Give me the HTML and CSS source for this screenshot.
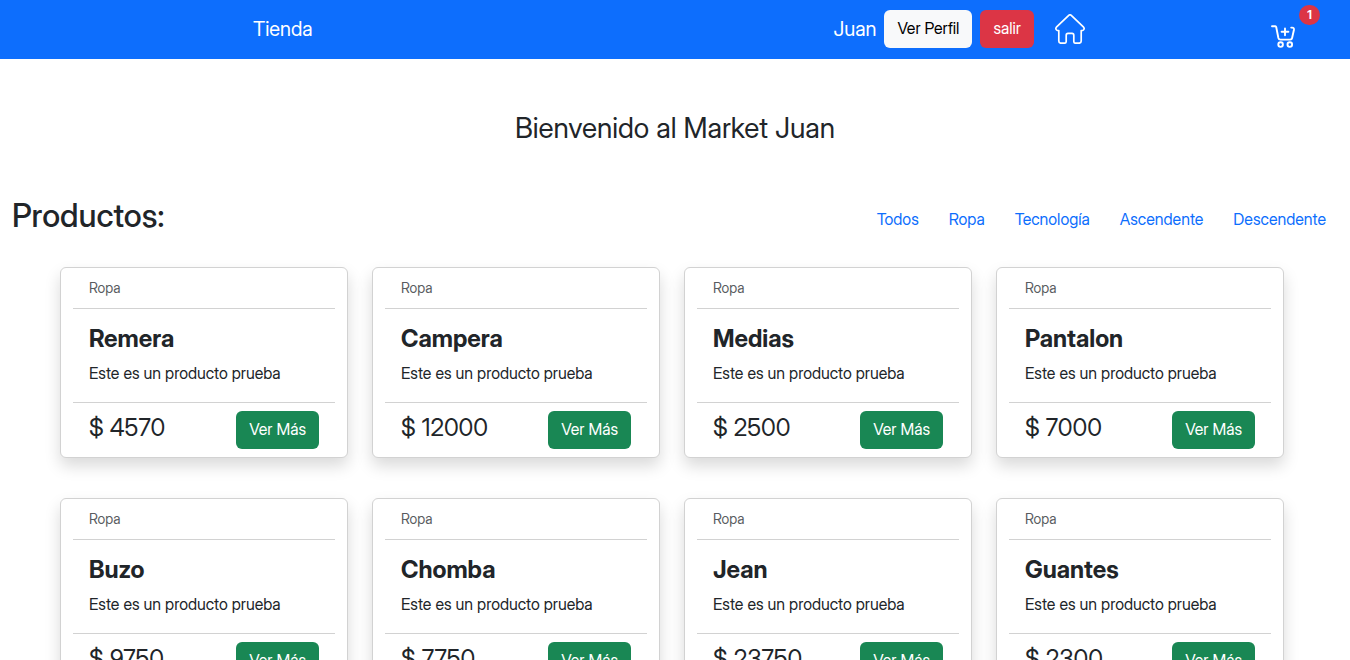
FILE: index.html
```html
<!DOCTYPE html>
<html lang="es">
<head>
<meta charset="utf-8">
<meta name="viewport" content="width=device-width, initial-scale=1">
<title>Tienda</title>
<link rel="stylesheet" href="styles.css">
</head>
<body>
<header class="navbar">
  <a class="brand" href="#">Tienda</a>
  <nav class="user-nav" aria-label="Usuario">
    <span class="user-name">Juan</span>
    <button class="btn btn-light" type="button">Ver Perfil</button>
    <button class="btn btn-danger" type="button">salir</button>
    <a class="home-link" href="#" aria-label="Inicio">
      <svg class="home-icon" viewBox="0 0 30 30" fill="none" stroke="currentColor" stroke-width="1.7" stroke-linejoin="round" stroke-linecap="round" aria-hidden="true">
        <path d="M14 1.2Q15 .4 16 1.2L28.6 13.2Q29.6 14.4 28.8 15.6Q28 16.8 26.2 16.6V27Q26.2 29.2 24 29.2H20.6Q18.8 29.2 18.8 27.4V21.4Q18.8 19.4 17 19.4H13Q11.2 19.4 11.2 21.4V27.4Q11.2 29.2 9.4 29.2H6Q3.8 29.2 3.8 27V16.6Q2 16.8 1.2 15.6Q.4 14.4 1.4 13.2Z"/>
      </svg>
    </a>
  </nav>
  <a class="cart-link" href="#" aria-label="Carrito">
    <svg class="cart-icon" viewBox="0 0 24 24" fill="none" stroke="currentColor" stroke-width="1.9" stroke-linejoin="round" stroke-linecap="round" aria-hidden="true">
      <path d="M1 2.2H4.4Q5 2.2 5.2 3L7.4 14Q7.8 15.6 9.4 15.6H19.2Q20.8 15.6 21.1 14L22.9 6Q23.3 3.6 21.2 3.6H20.2"/>
      <path d="M14 4.4V11.2M10.6 7.8H17.4"/>
      <circle cx="9.6" cy="20.6" r="2.3"/>
      <circle cx="18.8" cy="20.6" r="2.3"/>
    </svg>
    <span class="cart-badge">1</span>
  </a>
</header>
<main class="page">
  <h1 class="welcome">Bienvenido al Market Juan</h1>
  <div class="toolbar">
    <h2 class="toolbar-title">Productos:</h2>
    <nav class="filters" aria-label="Filtros">
      <a href="#">Todos</a>
      <a href="#">Ropa</a>
      <a href="#">Tecnología</a>
      <a href="#">Ascendente</a>
      <a href="#">Descendente</a>
    </nav>
  </div>
  <section class="products">
    <article class="card">
      <div class="card-header">Ropa</div>
      <div class="card-body"><h3 class="card-title">Remera</h3><p class="card-text">Este es un producto prueba</p></div>
      <div class="card-footer"><span class="price">$ 4570</span><button class="btn btn-success" type="button">Ver Más</button></div>
    </article>
    <article class="card">
      <div class="card-header">Ropa</div>
      <div class="card-body"><h3 class="card-title">Campera</h3><p class="card-text">Este es un producto prueba</p></div>
      <div class="card-footer"><span class="price">$ 12000</span><button class="btn btn-success" type="button">Ver Más</button></div>
    </article>
    <article class="card">
      <div class="card-header">Ropa</div>
      <div class="card-body"><h3 class="card-title">Medias</h3><p class="card-text">Este es un producto prueba</p></div>
      <div class="card-footer"><span class="price">$ 2500</span><button class="btn btn-success" type="button">Ver Más</button></div>
    </article>
    <article class="card">
      <div class="card-header">Ropa</div>
      <div class="card-body"><h3 class="card-title">Pantalon</h3><p class="card-text">Este es un producto prueba</p></div>
      <div class="card-footer"><span class="price">$ 7000</span><button class="btn btn-success" type="button">Ver Más</button></div>
    </article>
    <article class="card">
      <div class="card-header">Ropa</div>
      <div class="card-body"><h3 class="card-title">Buzo</h3><p class="card-text">Este es un producto prueba</p></div>
      <div class="card-footer"><span class="price">$ 9750</span><button class="btn btn-success" type="button">Ver Más</button></div>
    </article>
    <article class="card">
      <div class="card-header">Ropa</div>
      <div class="card-body"><h3 class="card-title">Chomba</h3><p class="card-text">Este es un producto prueba</p></div>
      <div class="card-footer"><span class="price">$ 7750</span><button class="btn btn-success" type="button">Ver Más</button></div>
    </article>
    <article class="card">
      <div class="card-header">Ropa</div>
      <div class="card-body"><h3 class="card-title">Jean</h3><p class="card-text">Este es un producto prueba</p></div>
      <div class="card-footer"><span class="price">$ 23750</span><button class="btn btn-success" type="button">Ver Más</button></div>
    </article>
    <article class="card">
      <div class="card-header">Ropa</div>
      <div class="card-body"><h3 class="card-title">Guantes</h3><p class="card-text">Este es un producto prueba</p></div>
      <div class="card-footer"><span class="price">$ 2300</span><button class="btn btn-success" type="button">Ver Más</button></div>
    </article>
  </section>
</main>
</body>
</html>
```
FILE: styles.css
```css
* {
  box-sizing: border-box;
}

html {
  scrollbar-width: none;
}

body {
  margin: 0;
  background: #fff;
  color: #212529;
  font-family: "Inter Display", Inter, "Liberation Sans", sans-serif;
  font-size: 16px;
  line-height: 24px;
}

h1, h2, h3, p {
  margin: 0;
}

a {
  color: #0d6efd;
  text-decoration: none;
}

.navbar {
  display: flex;
  align-items: center;
  padding: 10px 55px 11px 253px;
  background: #0d6efd;
  color: #fff;
}

.brand,
.user-name {
  color: #fff;
  font-size: 20px;
  line-height: 30px;
}

.user-nav {
  display: flex;
  align-items: center;
  gap: 8px;
  margin-left: auto;
}

.btn {
  padding: 5px 12px 7px;
  border: 1px solid transparent;
  border-radius: 6px;
  font: inherit;
  cursor: pointer;
}

.btn-light {
  background: #f8f9fa;
  color: #000;
}

.btn-danger {
  background: #dc3545;
  color: #fff;
}

.btn-success {
  background: #198754;
  color: #fff;
}

.home-link {
  display: flex;
  margin-left: 13px;
  color: #fff;
}

.home-icon {
  width: 30px;
  height: 30px;
}

.cart-link {
  position: relative;
  display: flex;
  margin-left: 186px;
  padding-top: 14px;
  color: #fff;
}

.cart-icon {
  width: 24px;
  height: 24px;
}

.cart-badge {
  position: absolute;
  top: -5px;
  right: -25px;
  padding: 4px 8px;
  border-radius: 12px;
  background: #dc3545;
  font-size: 12px;
  font-weight: 700;
  line-height: 12px;
}

.page {
  padding: 52px 0 40px;
}

.welcome {
  font-size: 28px;
  font-weight: 400;
  line-height: 34px;
  text-align: center;
}

.toolbar {
  display: flex;
  align-items: center;
  justify-content: space-between;
  padding: 52px 24px 32px 12px;
}

.toolbar-title {
  font-size: 32px;
  font-weight: 500;
  line-height: 38px;
}

.filters {
  display: flex;
  gap: 30px;
  padding-top: 6px;
}

.products {
  display: grid;
  grid-template-columns: repeat(auto-fill, minmax(264px, 1fr));
  gap: 40px 24px;
  padding: 0 66px 0 60px;
}

.card {
  padding: 0 12px;
  border: 1px solid #d2d2d2;
  border-radius: 6px;
  background: #fff;
  box-shadow: 0 8px 16px rgba(0, 0, 0, 0.15);
}

.card-header {
  padding: 8px 16px;
  border-bottom: 1px solid #d2d2d2;
  color: #595c5f;
  font-size: 14px;
}

.card-body {
  padding: 15px 16px 17px;
}

.card-title {
  margin-bottom: 8px;
  font-size: 24px;
  font-weight: 700;
  line-height: 29px;
}

.card-footer {
  display: flex;
  align-items: flex-start;
  justify-content: space-between;
  padding: 8px 16px;
  border-top: 1px solid #d2d2d2;
}

.price {
  font-size: 24px;
  line-height: 34px;
}
```
